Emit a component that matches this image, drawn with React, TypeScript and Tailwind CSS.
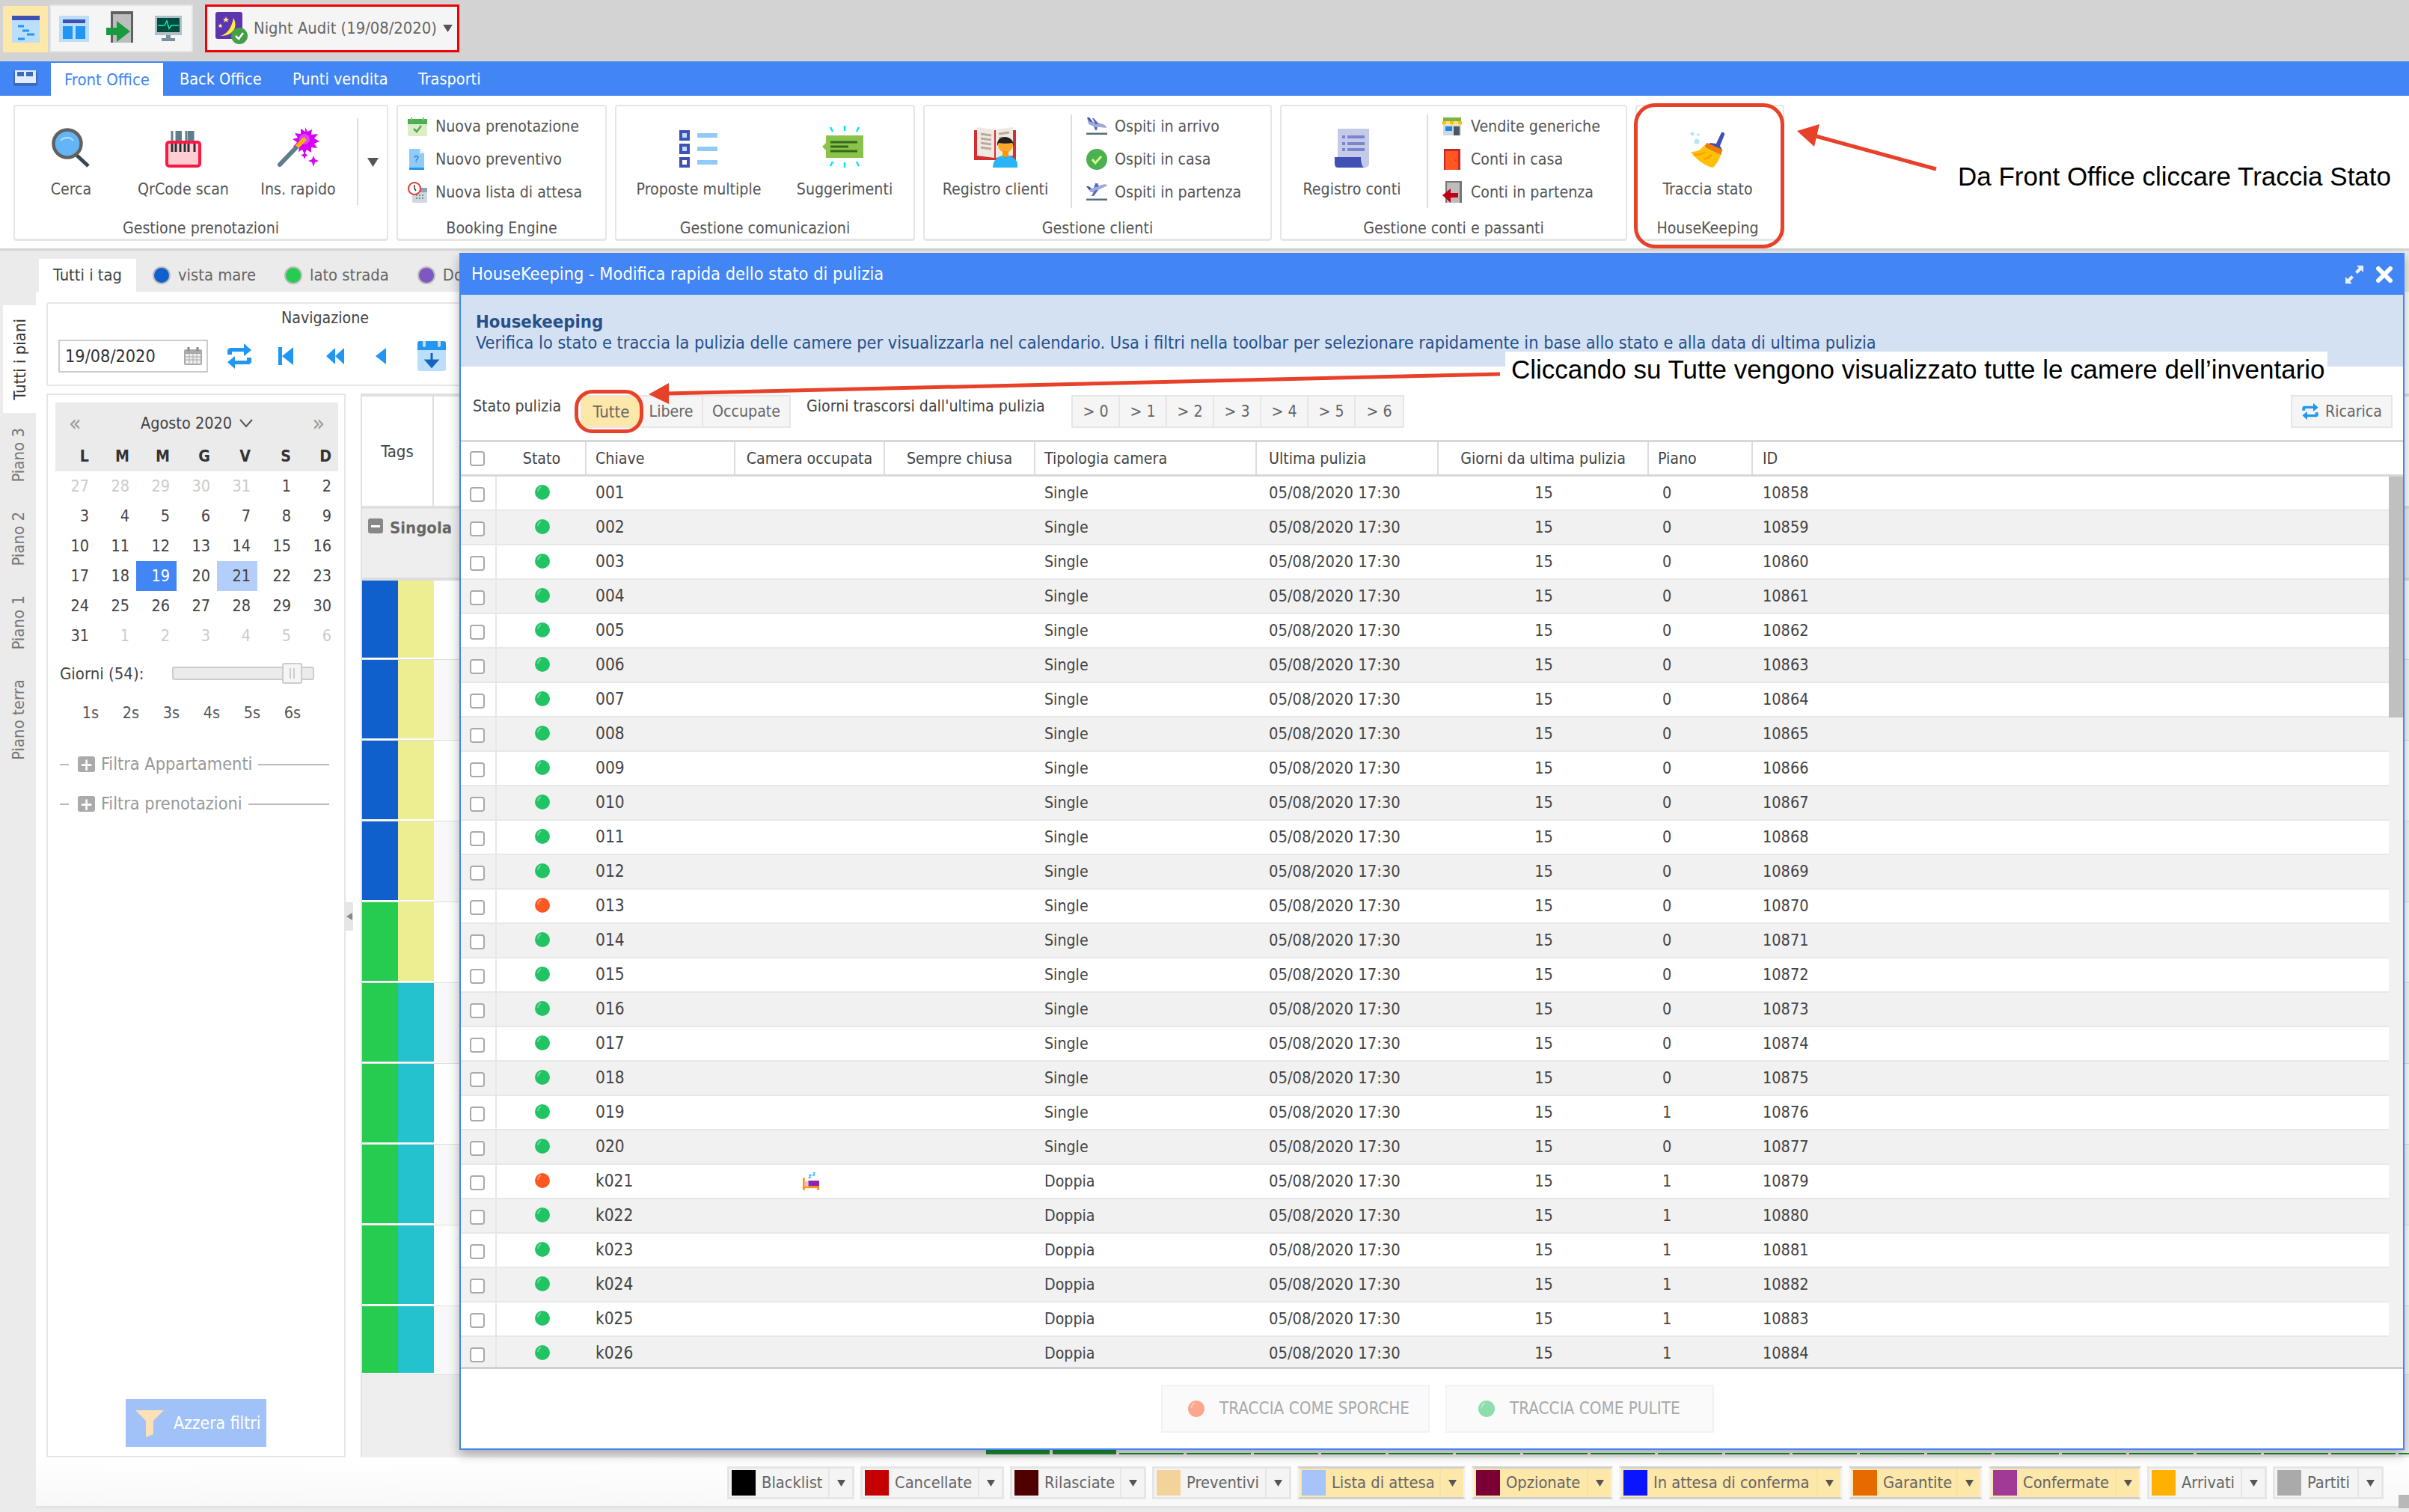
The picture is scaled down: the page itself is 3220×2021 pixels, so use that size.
import React from "react";

type IconProps = { className?: string };
const Gantt = ({ className }: IconProps) => (
  <svg viewBox="0 0 37 36" className={className}>
    <rect width="37" height="36" fill="#bbdefb" />
    <rect width="37" height="6" fill="#3f51b5" />
    <path d="M8 14h8M14 20h9M20 25h10M8 31h9" stroke="#2196f3" strokeWidth="3" />
  </svg>
);
const LayoutIco = ({ className }: IconProps) => (
  <svg viewBox="0 0 40 35" className={className}>
    <rect width="40" height="35" fill="#bbdefb" />
    <rect x="5" y="5" width="30" height="5" fill="#3f51b5" />
    <rect x="5" y="14" width="13" height="17" fill="#2196f3" />
    <rect x="22" y="14" width="13" height="17" fill="#2196f3" />
  </svg>
);
const DoorExit = ({ className }: IconProps) => (
  <svg viewBox="0 0 40 46" className={className}>
    <rect x="6" y="0" width="30" height="42" fill="#616161" />
    <rect x="9" y="4" width="24" height="38" fill="#bdbdbd" />
    <path d="M0 18h14v-9l18 14-18 14v-9H0z" fill="#169c3e" transform="translate(0 4)" />
  </svg>
);
const Monitor = ({ className }: IconProps) => (
  <svg viewBox="0 0 36 34" className={className}>
    <rect width="36" height="26" fill="#b0bec5" />
    <rect x="3" y="3" width="30" height="19" fill="#004d40" />
    <path d="M4 13h9l3-6 3 10 3-4h10" fill="none" stroke="#1de9b6" strokeWidth="1.5" />
    <rect x="15" y="26" width="6" height="5" fill="#78909c" />
    <rect x="9" y="30" width="18" height="4" fill="#78909c" />
  </svg>
);
const NightAudit = ({ className }: IconProps) => (
  <svg viewBox="0 0 44 44" className={className}>
    <rect x="0" y="0" width="36" height="36" rx="3" fill="#5e35b1" />
    <path d="M24 8c6 10 2 24-18 24 10-2 16-12 18-24z" fill="#ffeb3b" />
    <path d="M14 6l1 3 3 0-2 2 1 3-3-2-3 2 1-3-2-2 3 0zM6 15l1 2 2 0-1 2 1 2-3-1-2 1 1-2-1-2 2 0z" fill="#ffe57f" />
    <circle cx="32" cy="32" r="11" fill="#43a047" />
    <path d="M27 32l4 4 6-8" stroke="#fff" strokeWidth="2.5" fill="none" />
  </svg>
);
const Search = ({ className }: IconProps) => (
  <svg viewBox="0 0 52 53" className={className}>
    <path d="M33 36l16 15" stroke="#37474f" strokeWidth="5" />
    <circle cx="21" cy="21" r="18.5" fill="#64b5f6" stroke="#616161" strokeWidth="4.5" />
    <path d="M12 17a11 11 0 0 1 17 0" fill="none" stroke="#bbdefb" strokeWidth="2" />
  </svg>
);
const Scanner = ({ className }: IconProps) => (
  <svg viewBox="0 0 48 49" className={className}>
    <path d="M9 0v14M15 0v14M20 0v14M28 0v14M37 0v14" stroke="#607d8b" strokeWidth="3" />
    <path d="M30 0h6v14h-6zM16 0h6v14h-6z" fill="#607d8b" />
    <rect x="2" y="15" width="44" height="32" rx="3" fill="#ffcdd2" stroke="#ff1744" strokeWidth="4" />
    <path d="M9 17v11M14 17v11M20 17v11M26 17v11M31 17v11M39 17v11" stroke="#263238" strokeWidth="3" />
  </svg>
);
const Wand = ({ className }: IconProps) => (
  <svg viewBox="0 0 56 54" className={className}>
    <path d="M37 0l3 6 6-3-1 7 9-1-5 6 7 4-7 3 4 6-8-1 0 7-6-4-3 6-3-6-5 3 1-7-8 0 5-6-6-4 7-2-4-6 8 1 0-7 6 4z" fill="#d500f9" />
    <circle cx="36" cy="16" r="7" fill="#e040fb" />
    <path d="M3 50l23-24" stroke="#607d8b" strokeWidth="6" strokeLinecap="round" />
    <path d="M26 26l11-11" stroke="#ffb300" strokeWidth="6" />
    <path d="M36 32l1.500 4 3.500 1.500-3.500 1.500-1.500 4-1.500-4-3.500-1.500 3.500-1.500z" fill="#d500f9" />
    <path d="M48 38l2 5 5 2-5 2-2 6-2-6-5-2 5-2z" fill="#d500f9" />
  </svg>
);
const CalCheck = ({ className }: IconProps) => (
  <svg viewBox="0 0 26 26" className={className}>
    <rect y="3" width="26" height="23" rx="2" fill="#dcedc8" />
    <rect y="3" width="26" height="7" fill="#4caf50" />
    <path d="M5 1v4M21 1v4" stroke="#81c784" strokeWidth="2" />
    <path d="M8 16l4 4 6-8" stroke="#4caf50" strokeWidth="2.500" fill="none" />
  </svg>
);
const DocQ = ({ className }: IconProps) => (
  <svg viewBox="0 0 20 28" className={className}>
    <path d="M0 0h14l6 6v22H0z" fill="#90caf9" />
    <path d="M14 0l6 6h-6z" fill="#e3f2fd" />
    <rect y="25" width="20" height="3" fill="#2196f3" />
    <text x="6" y="18" fontSize="12" fill="#1565c0" fontFamily="Liberation Sans">?</text>
  </svg>
);
const ClockCal = ({ className }: IconProps) => (
  <svg viewBox="0 0 26 28" className={className}>
    <rect x="6" y="8" width="20" height="20" rx="2" fill="#cfd8dc" />
    <rect x="6" y="8" width="20" height="6" fill="#90a4ae" />
    <path d="M11 18h2M15 18h2M19 18h2M11 22h2M15 22h2M19 22h2" stroke="#78909c" strokeWidth="2" />
    <circle cx="9" cy="9" r="8" fill="#fff" stroke="#e53935" strokeWidth="2" />
    <path d="M9 4v5l2 3" stroke="#333" strokeWidth="1.500" fill="none" />
  </svg>
);
const ListIco = ({ className }: IconProps) => (
  <svg viewBox="0 0 52 50" className={className}>
    <rect x="0" width="14" height="14" fill="#3f51b5" /><rect x="4" y="4" width="6" height="6" fill="#bbdefb" />
    <rect x="0" y="18" width="14" height="14" fill="#3f51b5" /><rect x="4" y="22" width="6" height="6" fill="#bbdefb" />
    <rect x="0" y="36" width="14" height="14" fill="#3f51b5" /><rect x="4" y="40" width="6" height="6" fill="#fff" />
    <rect x="24" y="4" width="27" height="6" fill="#90caf9" />
    <rect x="24" y="22" width="27" height="6" fill="#90caf9" />
    <rect x="24" y="40" width="27" height="6" fill="#90caf9" />
  </svg>
);
const Suggest = ({ className }: IconProps) => (
  <svg viewBox="0 0 66 56" className={className}>
    <path d="M33 0v7M33 49v7M14 2l3 6M52 2l-3 6M14 54l3-6M52 54l-3-6" stroke="#00e5ff" strokeWidth="2.500" />
    <path d="M3 28l5-5v-10h50v30H8V33z" fill="#8bc34a" />
    <path d="M14 22h36M14 28h24M14 34h36" stroke="#33691e" strokeWidth="3" />
  </svg>
);
const BookPerson = ({ className }: IconProps) => (
  <svg viewBox="0 0 58 54" className={className}>
    <rect x="0" y="4" width="56" height="40" fill="#d32f2f" />
    <path d="M4 0l23 3v38L4 38zM52 0L29 3v38l23-3z" fill="#efe9e2" />
    <path d="M9 9l14 2M9 15l14 2M9 21l14 2M9 27l14 2M33 9l14-2M33 15l5-1" stroke="#b8aba0" strokeWidth="3" />
    <circle cx="42" cy="24" r="10" fill="#ffa726" />
    <path d="M31 25c-2-16 22-16 22 0l-2-4c-4 1-14 1-18 0z" fill="#212121" />
    <rect x="38" y="32" width="8" height="8" fill="#ff9800" />
    <path d="M25 54c0-10 7-15 13-16l4 3 4-3c6 1 13 6 13 16z" fill="#29b6f6" />
  </svg>
);
const PlaneArr = ({ className }: IconProps) => (
  <svg viewBox="0 0 28 24" className={className}>
    <path d="M1 0h3l5 6 10 2c5 1 8 3 8 6l-17-2-7-3z" fill="#9fa8da" />
    <path d="M1 0h3l5 7-5-2z" fill="#3f51b5" />
    <path d="M8 1h2l7 8-5 0zM10 12l5 1-1 4-2 0z" fill="#5c6bc0" />
    <rect y="20.500" width="28" height="2.500" fill="#546e7a" />
  </svg>
);
const PlaneDep = ({ className }: IconProps) => (
  <svg viewBox="0 0 28 24" className={className}>
    <path d="M0 4l3 0 4 3 14-5c3-1 6-1 7 1l-12 6-5 3-5 0z" fill="#9fa8da" />
    <path d="M0 4l3 0 4 3-3 2z" fill="#3f51b5" />
    <path d="M10 6l2-6 3 0 2 4zM10 11l3-2 3 0-6 8-3 0z" fill="#5c6bc0" />
    <rect y="20.500" width="28" height="2.500" fill="#546e7a" />
  </svg>
);
const CheckCircle = ({ className }: IconProps) => (
  <svg viewBox="0 0 28 28" className={className}>
    <circle cx="14" cy="14" r="14" fill="#4caf50" />
    <path d="M8 14l4 5 8-9" stroke="#ccff90" strokeWidth="3" fill="none" />
  </svg>
);
const Bill = ({ className }: IconProps) => (
  <svg viewBox="0 0 46 52" className={className}>
    <path d="M4 0h42v46c0 4-3 6-6 6H30V38H4z" fill="#c5cae9" />
    <path d="M0 38h35c0 8 2 14 5 14H4c-3 0-4-3-4-6z" fill="#3f51b5" />
    <path d="M10 11h4M17 11h23M10 20h4M17 20h23M10 28h4M17 28h23" stroke="#7986cb" strokeWidth="4" />
  </svg>
);
const Shop = ({ className }: IconProps) => (
  <svg viewBox="0 0 26 24" className={className}>
    <rect x="1" y="0" width="24" height="5" fill="#7cb342" />
    <path d="M0 5h5v4c0 1-5 1-5 0zM10 5h5v4c0 1-5 1-5 0zM21 5h5v4c0 1-5 1-5 0z" fill="#ffc107" />
    <path d="M5 5h5v4c0 1-5 1-5 0zM15 5h6v4c0 1-6 1-6 0z" fill="#ffe082" />
    <rect x="1" y="10" width="24" height="14" fill="#cfd8dc" />
    <rect x="4" y="12" width="9" height="6" fill="#1e88e5" />
    <rect x="15" y="12" width="8" height="12" fill="#455a64" />
  </svg>
);
const RedDoor = ({ className }: IconProps) => (
  <svg viewBox="0 0 22 28" className={className}>
    <rect width="22" height="28" fill="#c62828" />
    <rect x="2" y="3" width="17" height="25" fill="#ff5722" />
    <circle cx="16" cy="15" r="1" fill="#bf360c" />
  </svg>
);
const DoorOut = ({ className }: IconProps) => (
  <svg viewBox="0 0 26 30" className={className}>
    <rect x="4" width="22" height="29" fill="#757575" />
    <rect x="6" y="2" width="17" height="27" fill="#bdbdbd" />
    <path d="M0 19l11-9v6h10v6H11v7z" fill="#c00016" />
  </svg>
);
const Broom = ({ className }: IconProps) => (
  <svg viewBox="0 0 48 48" className={className}>
    <circle cx="3" cy="3" r="2.500" fill="#b3e5fc" />
    <circle cx="11" cy="4" r="1.700" fill="#b3e5fc" />
    <circle cx="9" cy="13" r="3.500" fill="#b3e5fc" />
    <path d="M42 1c2-1 5 1 4 3l-6 15 3 5-2 7-21-10 7-6 8 1z" fill="#3f51b5" />
    <path d="M19 19l4-4 20 9-2 7z" fill="#f57c00" />
    <path d="M1 27c8 0 14-3 17-8l23 12c-2 6-5 12-10 17-8-1-22-9-30-21z" fill="#ffc107" />
    <path d="M5 31c6 0 11-1 15-4M18 37c4-1 8-3 11-6" stroke="#ff9800" strokeWidth="2" fill="none" />
  </svg>
);
const Repeat = ({ className }: IconProps) => (
  <svg viewBox="0 0 36 36" className={className}>
    <path d="M2 16v-5c0-2 2-4 4-4h18V1l10 9-10 8v-6H8v4zM34 20v5c0 2-2 4-4 4H12v6L2 26l10-8v6h16v-4z" fill="#2196f3" />
  </svg>
);
const Caret = ({ className }: IconProps) => (
  <svg viewBox="0 0 10 8" className={className}>
    <path d="M0 0h10L5 8z" fill="currentColor" />
  </svg>
);
const Dot = ({ red, className }: { red?: boolean; className?: string }) => (
  <svg viewBox="0 0 20 20" className={className}>
    <circle cx="10" cy="10" r="10" fill={red ? "#ff5722" : "#20c463"} />
    <path d="M4 9a7 7 0 0 1 4-6" stroke="#fff" strokeOpacity=".45" strokeWidth="1.500" fill="none" />
  </svg>
);
const Bed = ({ className }: IconProps) => (
  <svg viewBox="0 0 24 26" className={className}>
    <path d="M14 0h4l-3 4h3M9 4h3l-3 4h3" stroke="#29b6f6" strokeWidth="1.400" fill="none" />
    <rect x="0" y="8" width="3" height="18" fill="#ff9800" />
    <rect x="21" y="14" width="3" height="12" fill="#ff9800" />
    <rect x="0" y="20" width="24" height="3" fill="#ff9800" />
    <rect x="8" y="12" width="16" height="8" fill="#8e24aa" />
    <rect x="3" y="13" width="5" height="7" fill="#e1bee7" />
  </svg>
);

const SmallRow = ({ icon, label, ic }: { icon: React.ReactNode; label: string; ic: string }) => (
  <div className="flex items-center h-[44px]">
    <div className={`flex ${ic}`}>{icon}</div>
    <span className="whitespace-nowrap">{label}</span>
  </div>
);

const BigBtn = ({ icon, label, w }: { icon: React.ReactNode; label: string; w: string }) => (
  <div className={`${w} flex flex-col items-center shrink-0`}>
    <div className="h-[82px] w-full flex items-end justify-center">{icon}</div>
    <div className="mt-[14px] leading-[30px] whitespace-nowrap">{label}</div>
  </div>
);

const Group = ({ w, title, children, tp }: { w: string; title: string; children: React.ReactNode; tp?: string }) => (
  <div className={`${w} h-[182px] shrink-0 border-2 border-b-[3px] border-[#e6e6e6] rounded-[4px] flex flex-col`}>
    <div className="h-[149px] flex">{children}</div>
    <div className={`text-center leading-[28px] ${tp ?? ""}`}>{title}</div>
  </div>
);

const Vtab = ({ label, h, active }: { label: string; h: string; active?: boolean }) => (
  <div className={`${h} flex items-center justify-center ${active ? "bg-white text-[#333] ml-[4px]" : "text-[#777]"}`}>
    <span className="[writing-mode:vertical-rl] rotate-180 whitespace-nowrap text-[22px]">{label}</span>
  </div>
);

const Calendar = () => {
  const prev = [27, 28, 29, 30, 31];
  const days = Array.from({ length: 31 }, (_, i) => i + 1);
  const next = [1, 2, 3, 4, 5, 6];
  return (
    <div className="w-[378px]">
      <div className="h-[92px] bg-[#ebebeb] text-[#444]">
        <div className="h-[52px] flex items-center justify-between px-[18px] pt-[4px] text-[#999]">
          <span className="text-[30px] leading-none">«</span>
          <span className="text-[#444] text-[21.500px] flex items-center gap-[10px]">
            Agosto 2020
            <svg viewBox="0 0 18 12" className="w-[18px] h-[12px]"><path d="M1 1l8 9 8-9" fill="none" stroke="#555" strokeWidth="2" /></svg>
          </span>
          <span className="text-[30px] leading-none">»</span>
        </div>
        <div className="grid grid-cols-7 h-[40px] items-center">
          {["L", "M", "M", "G", "V", "S", "D"].map((d, i) => (
            <div key={i} className="text-right pr-[9px] font-bold text-[#333]">{d}</div>
          ))}
        </div>
      </div>
      <div className="grid grid-cols-7 auto-rows-[40px] items-stretch text-[#444] text-[21.500px]">
        {prev.map((d, i) => <div key={"p" + i} className="flex items-center justify-end pr-[9px] text-[#ccc]">{d}</div>)}
        {days.map((d) => (
          <div key={d} className={`flex items-center justify-end pr-[9px] ${d === 19 ? "bg-[#4285f4] text-white" : d === 21 ? "bg-[#b3cefb]" : ""}`}>{d}</div>
        ))}
        {next.map((d, i) => <div key={"n" + i} className="flex items-center justify-end pr-[9px] text-[#ccc]">{d}</div>)}
      </div>
    </div>
  );
};

const FilterLine = ({ label }: { label: string }) => (
  <div className="flex items-center h-[53px] text-[#999] text-[23.300px] px-[4px]">
    <span className="w-[12px] h-[2px] bg-[#bbb] mr-[12px]"></span>
    <span className="w-[23px] h-[21px] bg-[#aaa] rounded-[3px] flex items-center justify-center text-white font-bold leading-none mr-[8px]">+</span>
    <span className="whitespace-nowrap">{label}</span>
    <span className="flex-1 h-[2px] bg-[#bbb] ml-[8px]"></span>
  </div>
);

const gridRows: [string, string][] = [
  ["bg-[#0f60cd]", "bg-[#eded91]"], ["bg-[#0f60cd]", "bg-[#eded91]"], ["bg-[#0f60cd]", "bg-[#eded91]"], ["bg-[#0f60cd]", "bg-[#eded91]"],
  ["bg-[#26cc4f]", "bg-[#eded91]"], ["bg-[#26cc4f]", "bg-[#24c2cf]"], ["bg-[#26cc4f]", "bg-[#24c2cf]"], ["bg-[#26cc4f]", "bg-[#24c2cf]"],
  ["bg-[#26cc4f]", "bg-[#24c2cf]"], ["bg-[#26cc4f]", "bg-[#24c2cf]"],
];
const rowHeights = ["h-[106px]", "h-[108px]", "h-[108px]", "h-[108px]", "h-[108px]", "h-[108px]", "h-[108px]", "h-[108px]", "h-[108px]", "h-[92px]"];

const rooms = Array.from({ length: 26 }, (_, i) => {
  const n = i + 1;
  const key = n <= 20 ? String(n).padStart(3, "0") : "k0" + n;
  const id = n <= 20 ? 10857 + n : 10858 + n;
  return {
    key,
    id,
    single: n <= 20,
    red: n === 13 || n === 21,
    bed: n === 21,
    piano: n === 19 || n > 20 ? 1 : 0,
  };
});

const cols = "grid grid-cols-[48px_120px_199px_200px_201px_296px_243px_281px_139px_1fr]";

const legend = [
  { label: "Blacklist", w: "w-[170px]", c: "bg-[#000000]", on: false },
  { label: "Cancellate", w: "w-[192px]", c: "bg-[#c40000]", on: false },
  { label: "Rilasciate", w: "w-[182px]", c: "bg-[#4f0000]", on: false },
  { label: "Preventivi", w: "w-[186px]", c: "bg-[#f2d49b]", on: false },
  { label: "Lista di attesa", w: "w-[225px]", c: "bg-[#a6c4fa]", on: true },
  { label: "Opzionate", w: "w-[189px]", c: "bg-[#7a0035]", on: true },
  { label: "In attesa di conferma", w: "w-[299px]", c: "bg-[#0a14ff]", on: true },
  { label: "Garantite", w: "w-[179px]", c: "bg-[#e66a00]", on: true },
  { label: "Confermate", w: "w-[204px]", c: "bg-[#a03a96]", on: true },
  { label: "Arrivati", w: "w-[160px]", c: "bg-[#ffb000]", on: false },
  { label: "Partiti", w: "w-[148px]", c: "bg-[#aaaaaa]", on: false },
];

export default function App() {
  return (
    <div className="relative w-[3220px] h-[2021px] overflow-hidden bg-[#ebebeb] font-['DejaVu_Sans_Condensed','Noto_Sans',sans-serif] text-[21.200px] text-[#555]">
      {/* quick bar */}
      <div className="h-[82px] bg-[#d3d3d3] flex items-start pl-[4px] pt-[6px]">
        <div className="w-[60px] h-[62px] bg-[#fde7a9] flex items-center justify-center mt-[2px]"><Gantt className="w-[37px] h-[36px]" /></div>
        <div className="ml-[2px] h-[64px] w-[192px] bg-[#f5f5f5] border-2 border-[#e4e4e4] flex items-center">
          <div className="w-[62px] flex justify-center"><LayoutIco className="w-[40px] h-[35px]" /></div>
          <div className="w-[64px] flex justify-center"><DoorExit className="w-[40px] h-[46px]" /></div>
          <div className="w-[62px] flex justify-center"><Monitor className="w-[36px] h-[34px]" /></div>
        </div>
        <div className="ml-[16px] w-[340px] h-[64px] bg-[#f5f5f5] border-[3px] border-[#f00000] flex items-center pl-[11px]">
          <NightAudit className="w-[44px] h-[44px]" />
          <span className="ml-[7px] text-[#666] whitespace-nowrap text-[21.800px]">Night Audit (19/08/2020)</span>
          <Caret className="ml-auto mr-[6px] w-[13px] h-[10px] text-[#555]" />
        </div>
      </div>

      {/* menu tabs */}
      <div className="h-[46px] bg-[#4285f4] flex items-end text-white text-[21.500px]">
        <div className="w-[68px] h-full flex items-center justify-center">
          <svg viewBox="0 0 32 24" className="w-[32px] h-[24px]">
            <rect y="2" width="32" height="20" rx="2" fill="#3a6bc0" />
            <rect x="2" y="1" width="28" height="17" fill="#e3ecfb" />
            <rect x="5" y="3" width="9" height="6" fill="#3a6bc0" /><rect x="17" y="3" width="9" height="6" fill="#3a6bc0" />
          </svg>
        </div>
        <div className="w-[150px] h-[44px] bg-white text-[#4285f4] text-[22px] flex items-center justify-center">Front Office</div>
        <div className="h-[44px] w-[151px] flex items-center ml-[22px]">Back Office</div>
        <div className="h-[44px] w-[168px] flex items-center">Punti vendita</div>
        <div className="h-[44px] flex items-center">Trasporti</div>
      </div>

      {/* ribbon */}
      <div className="h-[207px] bg-white border-b-[3px] border-[#d4d4d4] flex gap-[11px] pl-[18px] pt-[12px] text-[#555]">
        <Group w="w-[501px]" title="Gestione prenotazioni">
          <BigBtn w="w-[150px]" icon={<Search className="w-[52px] h-[53px]" />} label="Cerca" />
          <BigBtn w="w-[150px]" icon={<Scanner className="w-[48px] h-[49px]" />} label="QrCode scan" />
          <BigBtn w="w-[157px]" icon={<Wand className="w-[56px] h-[54px]" />} label="Ins. rapido" />
          <div className="w-[2px] h-[116px] mt-[16px] bg-[#ddd]"></div>
          <div className="flex-1 flex justify-center items-center"><Caret className="w-[15px] h-[12px] text-[#555]" /></div>
        </Group>
        <Group w="w-[281px]" title="Booking Engine">
          <div className="mt-[5px]">
            <SmallRow ic="w-[50px] pl-[13px]" icon={<CalCheck className="w-[26px] h-[26px]" />} label="Nuova prenotazione" />
            <SmallRow ic="w-[50px] pl-[15px]" icon={<DocQ className="w-[20px] h-[28px]" />} label="Nuovo preventivo" />
            <SmallRow ic="w-[50px] pl-[13px]" icon={<ClockCal className="w-[26px] h-[28px]" />} label="Nuova lista di attesa" />
          </div>
        </Group>
        <Group w="w-[401px]" title="Gestione comunicazioni">
          <BigBtn w="w-[220px]" icon={<ListIco className="w-[52px] h-[50px]" />} label="Proposte multiple" />
          <BigBtn w="w-[170px]" icon={<Suggest className="w-[66px] h-[56px]" />} label="Suggerimenti" />
        </Group>
        <Group w="w-[466px]" title="Gestione clienti">
          <BigBtn w="w-[189px] mr-[6px]" icon={<BookPerson className="w-[58px] h-[54px]" />} label="Registro clienti" />
          <div className="w-[2px] h-[125px] bg-[#ddd] mt-[11px]"></div>
          <div className="mt-[5px]">
            <SmallRow ic="w-[57px] pl-[19px]" icon={<PlaneArr className="w-[28px] h-[24px]" />} label="Ospiti in arrivo" />
            <SmallRow ic="w-[57px] pl-[19px]" icon={<CheckCircle className="w-[28px] h-[28px]" />} label="Ospiti in casa" />
            <SmallRow ic="w-[57px] pl-[19px]" icon={<PlaneDep className="w-[28px] h-[24px]" />} label="Ospiti in partenza" />
          </div>
        </Group>
        <Group w="w-[464px]" title="Gestione conti e passanti">
          <BigBtn w="w-[188px] mr-[6px]" icon={<Bill className="w-[46px] h-[52px]" />} label="Registro conti" />
          <div className="w-[2px] h-[125px] bg-[#ddd] mt-[11px]"></div>
          <div className="mt-[5px]">
            <SmallRow ic="w-[57px] pl-[19px]" icon={<Shop className="w-[26px] h-[24px]" />} label="Vendite generiche" />
            <SmallRow ic="w-[57px] pl-[21px]" icon={<RedDoor className="w-[22px] h-[28px]" />} label="Conti in casa" />
            <SmallRow ic="w-[57px] pl-[19px]" icon={<DoorOut className="w-[26px] h-[30px]" />} label="Conti in partenza" />
          </div>
        </Group>
        <Group w="w-[199px]" title="HouseKeeping" tp="pr-[6px]">
          <BigBtn w="w-[189px]" icon={<Broom className="w-[48px] h-[48px]" />} label="Traccia stato" />
        </Group>
      </div>

      {/* workspace */}
      <div className="flex h-[1681px]">
        <div className="w-[48px] shrink-0 pt-[73px] bg-[#ebebeb]">
          <Vtab label="Tutti i piani" h="h-[144px]" active />
          <Vtab label="Piano 3" h="h-[112px]" />
          <Vtab label="Piano 2" h="h-[112px]" />
          <Vtab label="Piano 1" h="h-[112px]" />
          <Vtab label="Piano terra" h="h-[147px]" />
        </div>
        <div className="flex-1 flex flex-col min-w-0">
          <div className="h-[55px] pt-[11px] pl-[4px] flex items-stretch bg-[#ebebeb] text-[#666] text-[21.800px]">
            <div className="w-[130px] bg-white text-[#444] flex items-center justify-center">Tutti i tag</div>
            <div className="flex items-center ml-[22px] gap-[10px]"><span className="w-[24px] h-[24px] rounded-full bg-[#0f60cd] border-2 border-[#bbb]"></span>vista mare</div>
            <div className="flex items-center ml-[38px] gap-[10px]"><span className="w-[24px] h-[24px] rounded-full bg-[#26cc4f] border-2 border-[#bbb]"></span>lato strada</div>
            <div className="flex items-center ml-[38px] gap-[10px]"><span className="w-[24px] h-[24px] rounded-full bg-[#7e57c2] border-2 border-[#bbb]"></span>Do</div>
          </div>
          <div className="bg-white h-[1558px] pl-[14px] pt-[14px] flex flex-col">
            <div className="w-[1000px] h-[112px] shrink-0 border-2 border-[#e6e6e6] rounded-[3px] relative">
              <div className="pl-[312px] pt-[4px] text-[#444] leading-[30px]">Navigazione</div>
              <div className="flex items-center pl-[14px] mt-[14px]">
                <div className="w-[200px] h-[44px] border-2 border-[#ccc] flex items-center justify-between pl-[7px] pr-[6px] text-[#333] text-[23.300px]">
                  19/08/2020
                  <svg viewBox="0 0 24 24" className="w-[24px] h-[26px]"><rect y="3" width="24" height="21" rx="2" fill="#aaa" /><path d="M6 0v5M18 0v5" stroke="#888" strokeWidth="3" /><path d="M2 9h20v13H2z" fill="#eee" /><path d="M2 13h20M2 17h20M7 9v13M12 9v13M17 9v13" stroke="#aaa" /></svg>
                </div>
                <Repeat className="ml-[24px] w-[36px] h-[40px]" />
                <svg viewBox="0 0 20 24" className="ml-[34px] w-[20px] h-[24px]"><path d="M0 0h5v24H0zM20 0v24L5 12z" fill="#2196f3" /></svg>
                <svg viewBox="0 0 24 22" className="ml-[44px] w-[24px] h-[22px]"><path d="M12 0v22L0 11zM24 0v22L12 11z" fill="#2196f3" /></svg>
                <svg viewBox="0 0 14 22" className="ml-[42px] w-[14px] h-[22px]"><path d="M14 0v22L0 11z" fill="#2196f3" /></svg>
                <svg viewBox="0 0 38 40" className="ml-[42px] w-[38px] h-[40px]"><rect width="38" height="40" rx="3" y="0" fill="#bbdefb" /><path d="M3 0h32a3 3 0 0 1 3 3v9H0V3a3 3 0 0 1 3-3z" fill="#2196f3" /><path d="M9 0v6M29 0v6" stroke="#cfd8dc" strokeWidth="4" strokeLinecap="round" /><path d="M19 16v14M12 26l7 8 7-8z" stroke="#1565c0" strokeWidth="3" fill="#1565c0" /></svg>
              </div>
            </div>
            <div className="flex mt-[10px] flex-1 min-h-0">
              {/* filters */}
              <div className="w-[400px] shrink-0 border-2 border-[#e6e6e6] pl-[10px] pr-[10px] pt-[10px] flex flex-col relative">
                <Calendar />
                <div className="flex items-center mt-[18px] ml-[6px] text-[#444] h-[24px] relative">
                  <span className="whitespace-nowrap text-[22px]">Giorni (54):</span>
                  <div className="absolute left-[150px] top-[3px] w-[190px] h-[18px] bg-[#ebebeb] border-2 border-[#ccc] rounded-[3px]"></div>
                  <div className="absolute left-[297px] top-[-2px] w-[27px] h-[28px] bg-[#f5f5f5] border-2 border-[#ccc] rounded-[3px] flex items-center justify-center gap-[3px]">
                    <i className="w-[2px] h-[14px] bg-[#ccc]"></i><i className="w-[2px] h-[14px] bg-[#ccc]"></i>
                  </div>
                </div>
                <div className="grid grid-cols-6 w-[324px] ml-[20px] mt-[25px] text-[#555] text-[21.500px]">
                  {["1s", "2s", "3s", "4s", "5s", "6s"].map((s) => <div key={s} className="text-center">{s}</div>)}
                </div>
                <div className="mt-[26px] pl-[2px] pr-[6px]">
                  <FilterLine label="Filtra Appartamenti" />
                  <FilterLine label="Filtra prenotazioni" />
                </div>
                <div className="mt-auto mb-[12px] self-center w-[188px] h-[64px] bg-[#a0c2f9] text-white text-[22.800px] flex items-center pl-[13px] gap-[13px] whitespace-nowrap">
                  <svg viewBox="0 0 38 38" className="w-[38px] h-[38px] shrink-0"><path d="M0 2h38L24 16v18l-10 4V16z" fill="#fde0b5" /></svg>
                  Azzera filtri
                </div>
              </div>
              {/* collapse handle */}
              <div className="w-[20px] shrink-0 pt-[680px]">
                <div className="w-[10px] h-[38px] bg-[#e6e6e6] flex items-center justify-center text-[#888]">
                  <svg viewBox="0 0 8 10" className="w-[8px] h-[10px]"><path d="M8 0v10L0 5z" fill="#888" /></svg>
                </div>
              </div>
              {/* planning */}
              <div className="flex-1 min-w-0 border-l-2 border-t-[4px] border-[#e0e0e0] flex flex-col bg-[#eee] overflow-hidden">
                <div className="h-[150px] bg-white flex border-b-[4px] border-[#e0e0e0] shrink-0">
                  <div className="w-[96px] border-r-2 border-[#ddd] flex items-center justify-center text-[#444] text-[22px]">Tags</div>
                </div>
                <div className="h-[96px] bg-[#eee] shrink-0 border-b-[4px] border-[#ddd] flex items-start pl-[8px] pt-[9px] font-bold text-[#666] text-[22px] gap-[9px] whitespace-nowrap">
                  <span className="mt-[4px] w-[20px] h-[20px] rounded-[3px] bg-[#888] flex items-center justify-center"><i className="w-[12px] h-[3px] bg-white"></i></span>
                  Singola
                </div>
                {gridRows.map((r, i) => (
                  <div key={i} className={`flex shrink-0 ${rowHeights[i]} ${i % 2 ? "bg-[#f8f8f8]" : "bg-white"} border-b border-[#e0e0e0]`}>
                    <div className={`w-[48px] ${r[0]} border-b-2 border-white`}></div>
                    <div className={`w-[48px] ${r[1]} border-b-2 border-white`}></div>
                  </div>
                ))}
              </div>
            </div>
          </div>
        </div>
      </div>

      {/* green bars under modal */}
      <div className="absolute left-[1318px] top-[1938px] flex gap-[4px]">
        <div className="w-[85px] h-[6px] bg-[#1e8c32]"></div>
        <div className="w-[85px] h-[6px] bg-[#1e8c32]"></div>
        {Array.from({ length: 20 }, (_, i) => (
          <div key={i} className="w-[86px] h-[2px] mt-[4px] bg-[#1e8c32]"></div>
        ))}
      </div>

      {/* status bar */}
      <div className="absolute left-[48px] right-0 top-[1948px] h-[68px] bg-gradient-to-b from-white to-[#f8f8f8] border-b-[3px] border-[#e4e4e4] flex justify-end items-start pt-[12px] pr-[34px] gap-[8px]">
        {legend.map((l) => (
          <div key={l.label} className={`${l.w} h-[44px] flex items-center border-[3px] shrink-0 ${l.on ? "bg-[#fde7a9] border-y-[#d0d0d0] border-x-[#f2f2f2]" : "bg-[#f4f4f4] border-[#e6e6e6]"} text-[#666]`}>
            <span className={`w-[32px] h-[34px] ml-[3px] shrink-0 ${l.c}`}></span>
            <span className="flex-1 pl-[8px] whitespace-nowrap overflow-hidden text-[21.700px]">{l.label}</span>
            <span className={`w-[32px] h-full border-l-2 ${l.on ? "border-[#f2e2b0]" : "border-[#e6e6e6]"} flex items-center justify-center shrink-0`}>
              <Caret className="w-[11px] h-[9px] text-[#555]" />
            </span>
          </div>
        ))}
      </div>
      <div className="absolute right-0 top-[1998px] w-[14px] h-[18px] bg-[#b8b8b8]"></div>

      {/* modal */}
      <div className="absolute left-[614px] top-[338px] w-[2600px] h-[1600px] border-2 border-[#4285f4] bg-white flex flex-col shadow-[0_6px_14px_rgba(0,0,0,0.3)]">
        <div className="h-[54px] shrink-0 bg-[#4285f4] text-white text-[23.400px] flex items-center justify-between pl-[14px] pr-[14px]">
          <span>HouseKeeping - Modifica rapida dello stato di pulizia</span>
          <div className="flex items-center gap-[15px]">
            <svg viewBox="0 0 28 28" className="w-[28px] h-[28px]"><path d="M17 2h9v9l-3-3-5 5-3-3 5-5zM11 26H2v-9l3 3 5-5 3 3-5 5z" fill="#e8f0fe" /></svg>
            <svg viewBox="0 0 22 22" className="w-[22px] h-[22px]"><path d="M3 3l16 16M19 3L3 19" stroke="#fff" strokeWidth="6" strokeLinecap="round" /></svg>
          </div>
        </div>
        <div className="h-[96px] shrink-0 bg-[#d4e1f2] text-[#27508a] pl-[20px] pt-[22px]">
          <div className="font-bold leading-[28px] text-[23.700px]">Housekeeping</div>
          <div className="leading-[28px] whitespace-nowrap text-[23.300px]">Verifica lo stato e traccia la pulizia delle camere per visualizzarla nel calendario. Usa i filtri nella toolbar per selezionare rapidamente in base allo stato e alla data di ultima pulizia</div>
        </div>
        <div className="h-[101px] shrink-0 border-b-[3px] border-[#d8d8d8] pt-[38px] pl-[16px] pr-[16px] flex items-start text-[#555]">
          <span className="w-[144px] text-[#444] leading-[32px] -mt-[1px] whitespace-nowrap">Stato pulizia</span>
          <div className="h-[44px] flex border-2 border-[#e6e6e6] bg-[#f5f5f5] text-[#666]">
            <div className="w-[78px] bg-[#fde7a9] flex items-center justify-center text-[22px]">Tutte</div>
            <div className="w-[84px] flex items-center justify-center border-r-2 border-[#e6e6e6]">Libere</div>
            <div className="w-[115px] flex items-center justify-center">Occupate</div>
          </div>
          <span className="ml-[21px] w-[354px] text-[#444] leading-[32px] -mt-[1px] whitespace-nowrap">Giorni trascorsi dall'ultima pulizia</span>
          <div className="h-[44px] flex border-2 border-[#e6e6e6] bg-[#f5f5f5] text-[#666]">
            {["> 0", "> 1", "> 2", "> 3", "> 4", "> 5", "> 6"].map((s, i) => (
              <div key={s} className={`w-[63px] flex items-center justify-center ${i < 6 ? "border-r-2 border-[#e6e6e6]" : ""}`}>{s}</div>
            ))}
          </div>
          <div className="ml-auto mr-[-2px] w-[136px] h-[44px] border-2 border-[#e6e6e6] bg-[#f5f5f5] flex items-center justify-center gap-[8px] text-[#666]">
            <Repeat className="w-[24px] h-[28px]" />
            Ricarica
          </div>
        </div>
        <div className={`${cols} h-[46px] shrink-0 border-b-[3px] border-[#d8d8d8] text-[#444] items-stretch`}>
          <div className="flex items-center pl-[12px]"><span className="w-[20px] h-[20px] rounded-[4px] border-2 border-[#aaa] bg-white"></span></div>
          <div className="flex items-center justify-center border-r-2 border-[#ddd] pl-[2px]">Stato</div>
          <div className="flex items-center pl-[12px] border-r-2 border-[#ddd]">Chiave</div>
          <div className="flex items-center justify-center border-r-2 border-[#ddd] whitespace-nowrap">Camera occupata</div>
          <div className="flex items-center justify-center border-r-2 border-[#ddd] whitespace-nowrap">Sempre chiusa</div>
          <div className="flex items-center pl-[12px] border-r-2 border-[#ddd]">Tipologia camera</div>
          <div className="flex items-center pl-[16px] border-r-2 border-[#ddd]">Ultima pulizia</div>
          <div className="flex items-center justify-center border-r-2 border-[#ddd] whitespace-nowrap">Giorni da ultima pulizia</div>
          <div className="flex items-center pl-[12px] border-r-2 border-[#ddd]">Piano</div>
          <div className="flex items-center pl-[13px]">ID</div>
        </div>
        <div className="flex-1 min-h-0 flex border-b-[3px] border-[#d0d0d0]">
          <div className="flex-1 min-w-0 overflow-hidden">
            {rooms.map((r, i) => (
              <div key={r.key} className={`${cols} h-[46px] border-b-2 border-[#e8e8e8] ${i % 2 ? "bg-[#f1f1f1]" : "bg-white"} text-[#444] text-[21.500px]`}>
                <div className="border-r-2 border-[#e8e8e8] pl-[12px] pt-[14px]"><span className="block w-[20px] h-[20px] rounded-[4px] border-2 border-[#aaa] bg-white"></span></div>
                <div className="flex justify-center pl-[2px] pt-[11px]"><Dot red={r.red} className="w-[20px] h-[20px]" /></div>
                <div className="pl-[12px] text-[22.500px] leading-[42px]">{r.key}</div>
                <div className="flex justify-center pt-[10px] pl-[2px]">{r.bed && <Bed className="w-[22px] h-[24px]" />}</div>
                <div></div>
                <div className="pl-[12px] leading-[44px] text-[21.200px]">{r.single ? "Single" : "Doppia"}</div>
                <div className="pl-[16px] leading-[44px] text-[21.800px] whitespace-nowrap">05/08/2020 17:30</div>
                <div className="text-center leading-[44px]">15</div>
                <div className="pl-[18px] leading-[44px]">{r.piano}</div>
                <div className="pl-[13px] leading-[44px]">{r.id}</div>
              </div>
            ))}
          </div>
          <div className="w-[19px] shrink-0 bg-[#f1f1f1]">
            <div className="h-[322px] bg-[#c0c0c0]"></div>
          </div>
        </div>
        <div className="h-[106px] shrink-0 flex gap-[21px] pt-[21px] pl-[936px] text-[#aaa] text-[22.300px] whitespace-nowrap">
          <div className="w-[359px] h-[64px] border-2 border-[#f2f2f2] bg-[#fafafa] flex items-center pl-[34px] gap-[20px]">
            <Dot red className="w-[22px] h-[22px] opacity-50 shrink-0" />
            TRACCIA COME SPORCHE
          </div>
          <div className="w-[359px] h-[64px] border-2 border-[#f2f2f2] bg-[#fafafa] flex items-center pl-[42px] gap-[20px]">
            <Dot className="w-[22px] h-[22px] opacity-50 shrink-0" />
            TRACCIA COME PULITE
          </div>
        </div>
      </div>

      {/* annotations */}
      <div className="absolute left-[2184px] top-[138px] w-[201px] h-[194px] border-[5px] border-[#e8412a] rounded-[28px]"></div>
      <svg className="absolute left-[2390px] top-[160px] w-[210px] h-[80px]" viewBox="0 0 210 80">
        <path d="M198 66L30 20" stroke="#e8412a" strokeWidth="5" />
        <path d="M12 15l30-9-7 30z" fill="#e8412a" />
      </svg>
      <div className="absolute left-[2617px] top-[212px] font-['Liberation_Sans',sans-serif] text-[35px] text-black leading-[48px] whitespace-nowrap">Da Front Office cliccare Traccia Stato</div>
      <div className="absolute left-[768px] top-[521px] w-[92px] h-[58px] border-[5px] border-[#e8412a] rounded-[24px]"></div>
      <svg className="absolute left-[860px] top-[490px] w-[1150px] h-[50px]" viewBox="0 0 1150 50">
        <path d="M1145 10L30 36" stroke="#e8412a" strokeWidth="5" />
        <path d="M7 37l27-15v28z" fill="#e8412a" />
      </svg>
      <div className="absolute left-[2012px] top-[470px] w-[1099px] h-[48px] bg-white pl-[8px] font-['Liberation_Sans',sans-serif] text-[35px] text-black leading-[48px] whitespace-nowrap">Cliccando su Tutte vengono visualizzato tutte le camere dell’inventario</div>
    </div>
  );
}
